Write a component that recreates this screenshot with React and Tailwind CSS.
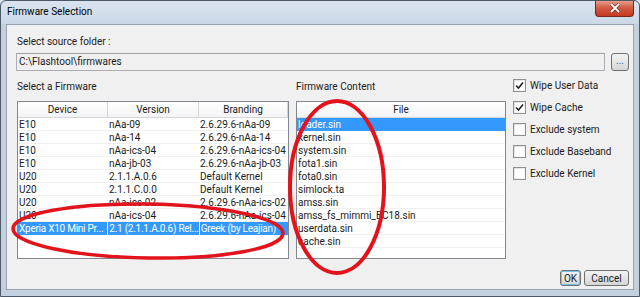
import React from 'react';

const firmwares = [
  ['E10', 'nAa-09', '2.6.29.6-nAa-09'],
  ['E10', 'nAa-14', '2.6.29.6-nAa-14'],
  ['E10', 'nAa-ics-04', '2.6.29.6-nAa-ics-04'],
  ['E10', 'nAa-jb-03', '2.6.29.6-nAa-jb-03'],
  ['U20', '2.1.1.A.0.6', 'Default Kernel'],
  ['U20', '2.1.1.C.0.0', 'Default Kernel'],
  ['U20', 'nAa-ics-02', '2.6.29.6-nAa-ics-02'],
  ['U20', 'nAa-ics-04', '2.6.29.6-nAa-ics-04'],
  ['Xperia X10 Mini Pr...', '2.1 (2.1.1.A.0.6) Rel...', 'Greek (by Leajian)'],
];

const files = [
  'loader.sin',
  'kernel.sin',
  'system.sin',
  'fota1.sin',
  'fota0.sin',
  'simlock.ta',
  'amss.sin',
  'amss_fs_mimmi_BC18.sin',
  'userdata.sin',
  'cache.sin',
];

const options = [
  ['Wipe User Data', true],
  ['Wipe Cache', true],
  ['Exclude system', false],
  ['Exclude Baseband', false],
  ['Exclude Kernel', false],
];

function HeaderCell({ label, className }) {
  return (
    <div className={`h-[16px] flex items-center justify-center border-r border-[#d5d5d5] border-b border-b-[#d5d5d5] bg-linear-to-b from-white to-[#f3f4f6] ${className}`}>
      {label}
    </div>
  );
}

function Checkbox({ checked }) {
  return (
    <div className="w-[13px] h-[13px] border border-[#8e8f8f] bg-linear-to-br from-[#dcdcdc] to-white p-[1px]">
      <div className="w-full h-full bg-white flex items-center justify-center">
        {checked && (
          <svg width="9" height="9" viewBox="0 0 9 9">
            <path d="M1 4.5 L3.5 7 L8 1.5" fill="none" stroke="#222" strokeWidth="1.6" />
          </svg>
        )}
      </div>
    </div>
  );
}

function WinButton({ children, className }) {
  return (
    <div className={`h-[16px] flex items-center justify-center rounded-[3px] border border-[#707070] bg-linear-to-b from-[#f2f2f2] via-[#e6e6e6] to-[#d4d4d4] ${className}`}>
      {children}
    </div>
  );
}

export default function App() {
  return (
    <div className="relative w-[640px] h-[297px] overflow-hidden bg-[#c3d0de] font-['Roboto',sans-serif] text-[10px] text-[#1b1b1b]">
      <div className="absolute inset-0 rounded-t-[6px] border border-[#4c5866] pointer-events-none" />

      {/* title bar */}
      <div className="h-[24px] flex items-start justify-between bg-linear-to-b from-[#dbe5f0] to-[#cbd8e6] pl-[7px] pr-[6px]">
        <span className="mt-[4px] text-[10px] leading-[16px] text-black">Firmware Selection</span>
        <div className="w-[39px] h-[17px] rounded-b-[4px] border border-t-0 border-[#76281d] bg-linear-to-b from-[#e9a594] via-[#d15a42] to-[#c2391f] flex items-center justify-center">
          <svg width="12" height="10" viewBox="0 0 12 10">
            <path d="M2 1 L10 9 M10 1 L2 9" stroke="#6b2a20" strokeWidth="3.2" />
            <path d="M2 1 L10 9 M10 1 L2 9" stroke="#fff" strokeWidth="1.8" />
          </svg>
        </div>
      </div>

      {/* client area */}
      <div className="ml-[6px] w-[628px] h-[266px] border border-[#97a3b0] bg-[#f0f0f0] pl-[10px] flex flex-col">
        <div className="mt-[10px] h-[14px] leading-[14px]">Select source folder :</div>
        <div className="mt-[4px] flex items-center">
          <div className="-ml-[1px] w-[589px] h-[18px] border border-[#abadb3] border-t-[#9da0a6] bg-[#f0f0f0] leading-[16px] pl-[2px]">
            C:\Flashtool\firmwares
          </div>
          <WinButton className="ml-[6px] w-[18px] !h-[18px]">
            <span className="text-[#2a5fa8] leading-[10px] -mt-[3px] text-[10px]">...</span>
          </WinButton>
        </div>

        <div className="mt-[9px] flex">
          {/* firmware list */}
          <div className="w-[272px] flex flex-col">
            <div className="h-[14px] leading-[14px]">Select a Firmware</div>
            <div className="mt-[7px] h-[158px] border border-[#828790] bg-white">
              <div className="flex">
                <HeaderCell label="Device" className="w-[90px]" />
                <HeaderCell label="Version" className="w-[91px]" />
                <HeaderCell label="Branding" className="w-[89px]" />
              </div>
              {firmwares.map((r, i) => {
                const sel = i === firmwares.length - 1;
                return (
                  <div key={i} className={`flex h-[13px] leading-[13px] ${sel ? 'text-white tracking-[-0.25px]' : 'border-b border-[#f0f0f0]'}`}>
                    <div className={`w-[90px] pl-[1px] whitespace-nowrap overflow-hidden ${sel ? 'bg-[#3399ff] mr-[1px] w-[89px]' : ''}`}>{r[0]}</div>
                    <div className={`w-[91px] pl-[1px] whitespace-nowrap overflow-hidden ${sel ? 'bg-[#3399ff] mr-[1px] w-[90px]' : ''}`}>{r[1]}</div>
                    <div className={`w-[89px] pl-[1px] whitespace-nowrap overflow-hidden ${sel ? 'bg-[#3399ff]' : ''}`}>{r[2]}</div>
                  </div>
                );
              })}
            </div>
          </div>

          {/* firmware content */}
          <div className="ml-[7px] w-[210px] flex flex-col">
            <div className="h-[14px] leading-[14px]">Firmware Content</div>
            <div className="mt-[7px] h-[158px] border border-[#828790] bg-white">
              <HeaderCell label="File" className="w-full border-r-0" />
              {files.map((f, i) => (
                <div key={f} className={`h-[13px] leading-[13px] pl-[1px] ${i === 0 ? 'bg-[#3399ff] text-white' : 'border-b border-[#f0f0f0]'}`}>
                  {f}
                </div>
              ))}
            </div>
          </div>

          {/* options */}
          <div className="ml-[7px] -mt-[1px] flex flex-col gap-[9px]">
            {options.map(([label, checked]) => (
              <div key={label} className="flex items-center h-[13px]">
                <Checkbox checked={checked} />
                <span className="ml-[4px] leading-[13px]">{label}</span>
              </div>
            ))}
          </div>
        </div>

        <div className="mt-[11px] flex justify-end pr-[4px] gap-[3px]">
          <WinButton className="w-[21px] border-[#3c7fb1] shadow-[inset_0_0_0_1px_#6fc4ee]">OK</WinButton>
          <WinButton className="w-[45px]">Cancel</WinButton>
        </div>
      </div>

      {/* red annotation marks */}
      <svg className="absolute inset-0 pointer-events-none" width="640" height="297" viewBox="0 0 640 297">
        <ellipse cx="148" cy="231" rx="135" ry="27" fill="none" stroke="#e3131b" strokeWidth="3.5" transform="rotate(1 148 231)" />
        <ellipse cx="337" cy="187" rx="47" ry="86" fill="none" stroke="#e3131b" strokeWidth="4" />
      </svg>
    </div>
  );
}
